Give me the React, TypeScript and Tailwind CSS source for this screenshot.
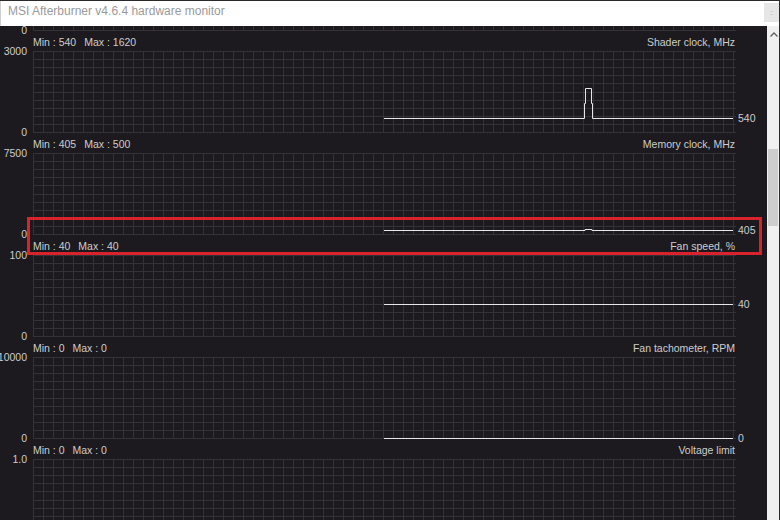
import React from "react";

type Panel = {
  title: string;
  min: string;
  max: string;
  top: string;
  path?: string;
  value?: string;
  valueY?: number;
  scrolledOut?: boolean;
  cutBelow?: boolean;
};

// grid coordinates: 703 x 82, x offset 33 from the window edge
const panels: Panel[] = [
  { title: "Core clock, MHz", min: "135", max: "1100", top: "3000", scrolledOut: true },
  {
    title: "Shader clock, MHz",
    min: "540",
    max: "1620",
    top: "3000",
    path: "M351,67.5 H551.5 V52.5 H552.5 V37.5 H558.5 V52.5 H559.5 V67.5 H700",
    value: "540",
    valueY: 67,
  },
  {
    title: "Memory clock, MHz",
    min: "405",
    max: "500",
    top: "7500",
    path: "M351,77.5 H552 V76.5 H559 V77.5 H700",
    value: "405",
    valueY: 77,
  },
  {
    title: "Fan speed, %",
    min: "40",
    max: "40",
    top: "100",
    path: "M351,49.5 H700",
    value: "40",
    valueY: 49,
  },
  {
    title: "Fan tachometer, RPM",
    min: "0",
    max: "0",
    top: "10000",
    path: "M351,81.5 H700",
    value: "0",
    valueY: 81,
  },
  { title: "Voltage limit", min: "0", max: "0", top: "1.0", cutBelow: true },
];

const vLines = Array.from({ length: 71 }, (_, i) => i * 10 + 0.5);
const hLines = Array.from({ length: 11 }, (_, i) => Math.round(i * 8.1) + 0.5);

function Grid({ path }: { path?: string }) {
  return (
    <svg width="703" height="82" className="block">
      {vLines.map((x) => (
        <line key={"v" + x} x1={x} y1={0} x2={x} y2={82} stroke="#343237" strokeWidth="1" />
      ))}
      {hLines.map((y) => (
        <line key={"h" + y} x1={0} y1={y} x2={703} y2={y} stroke="#343237" strokeWidth="1" />
      ))}
      {path && <path d={path} fill="none" stroke="#e6e6e6" strokeWidth="1" />}
    </svg>
  );
}

function GraphPanel({ p }: { p: Panel }) {
  return (
    <div className="flex h-[102px] shrink-0">
      {/* y axis */}
      <div className="flex w-[33px] flex-col items-end justify-between pr-[6px] pt-[14px]">
        <span>{p.scrolledOut ? "" : p.top}</span>
        <span className="-mb-[5px]">{p.cutBelow ? "" : "0"}</span>
      </div>
      <div className="flex w-[703px] flex-col">
        {/* header, empty for the panel scrolled out above the view */}
        <div className="flex h-[20px] items-center justify-between pt-[2px]">
          {!p.scrolledOut && (
            <>
              <div className="flex gap-[8px]">
                <span>Min : {p.min}</span>
                <span>Max : {p.max}</span>
              </div>
              <span className="pr-[1px]">{p.title}</span>
            </>
          )}
        </div>
        <div className="relative h-[82px]">
          <Grid path={p.path} />
          {p.value && (
            <span
              className="absolute left-[705px]"
              style={{ top: (p.valueY ?? 0) - 6 }}
            >
              {p.value}
            </span>
          )}
        </div>
      </div>
    </div>
  );
}

export default function App() {
  return (
    <div className="relative flex h-[520px] w-[780px] flex-col overflow-hidden border-t border-r border-[#2a2a2a] bg-white font-['Liberation_Sans',Arial,sans-serif]">
      {/* Title bar */}
      <div className="flex h-[25px] shrink-0 items-start justify-between border-l border-[#d0d0d0] bg-white">
        <span className="pl-[7px] pt-[3px] text-[12px] leading-[14px] text-[#9a9a9a]">
          MSI Afterburner v4.6.4 hardware monitor
        </span>
        <div className="mt-[2px] flex h-[19px] w-[15px] items-center justify-center bg-[#e6e6e6]">
          <div className="flex flex-col gap-[2px]">
            <div className="h-px w-[3px] bg-[#d2d2d2]" />
            <div className="h-px w-[3px] bg-[#d2d2d2]" />
          </div>
        </div>
      </div>

      {/* Body */}
      <div className="flex min-h-0 flex-1">
        <div className="min-w-0 flex-1 overflow-hidden bg-[#1c1a1e] text-[10.5px] leading-[12px] text-[#cdcdcd]">
          <div className="-mt-[97px] flex flex-col">
            {panels.map((p) => (
              <GraphPanel key={p.title} p={p} />
            ))}
          </div>
        </div>

        {/* Scrollbar */}
        <div className="flex w-[12px] shrink-0 flex-col bg-[#f0f0f0]">
          <div className="flex h-[14px] items-center justify-center pl-[2px] pt-[2px]">
            <svg width="8" height="5" viewBox="0 0 8 5">
              <path d="M0.5 4.5 L4 1 L7.5 4.5" fill="none" stroke="#606060" strokeWidth="1.3" />
            </svg>
          </div>
          <div className="ml-[1px] mt-[109px] h-[77px] w-[10px] bg-[#cdcdcd]" />
        </div>
      </div>

      {/* Highlight box */}
      <div className="absolute left-[27px] top-[216px] h-[38px] w-[735px] border-[3px] border-[#d8232d]" />
    </div>
  );
}
